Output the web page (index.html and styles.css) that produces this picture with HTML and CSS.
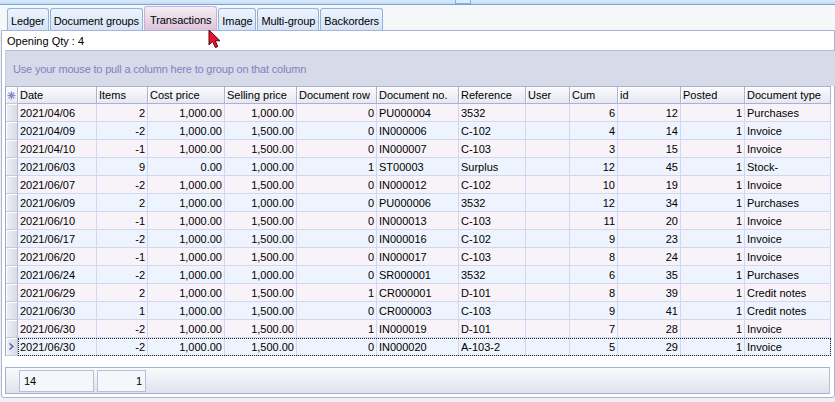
FILE: index.html
```html
<!DOCTYPE html>
<html>
<head>
<meta charset="utf-8">
<link rel="stylesheet" href="styles.css">
</head>
<body>
<div class="app">
  <div class="topstrip"><span class="grip"></span></div>
  <div class="tabbar">
    <div class="tab">Ledger</div>
    <div class="tab">Document groups</div>
    <div class="tab active">Transactions</div>
    <div class="tab">Image</div>
    <div class="tab">Multi-group</div>
    <div class="tab">Backorders</div>
  </div>
  <div class="panel">
    <div class="opening">Opening Qty : 4</div>
    <div class="grouparea">Use your mouse to pull a column here to group on that column</div>
    <div class="grid">
      <div class="row head">
        <div class="ind"><svg width="9" height="9" viewBox="0 0 9 9"><g stroke="#7b8cc8" stroke-width="1.2"><line x1="4.5" y1="0.5" x2="4.5" y2="8.5"/><line x1="0.5" y1="4.5" x2="8.5" y2="4.5"/><line x1="1.6" y1="1.6" x2="7.4" y2="7.4"/><line x1="7.4" y1="1.6" x2="1.6" y2="7.4"/></g></svg></div>
        <div>Date</div><div>Items</div><div>Cost price</div><div>Selling price</div><div>Document row</div><div>Document no.</div><div>Reference</div><div>User</div><div>Cum</div><div>id</div><div>Posted</div><div>Document type</div>
      </div>
      <div class="row odd"><div class="ind"></div><div>2021/04/06</div><div class="r">2</div><div class="r">1,000.00</div><div class="r">1,000.00</div><div class="r">0</div><div>PU000004</div><div>3532</div><div></div><div class="r">6</div><div class="r">12</div><div class="r">1</div><div>Purchases</div></div>
      <div class="row even"><div class="ind"></div><div>2021/04/09</div><div class="r">-2</div><div class="r">1,000.00</div><div class="r">1,500.00</div><div class="r">0</div><div>IN000006</div><div>C-102</div><div></div><div class="r">4</div><div class="r">14</div><div class="r">1</div><div>Invoice</div></div>
      <div class="row odd"><div class="ind"></div><div>2021/04/10</div><div class="r">-1</div><div class="r">1,000.00</div><div class="r">1,500.00</div><div class="r">0</div><div>IN000007</div><div>C-103</div><div></div><div class="r">3</div><div class="r">15</div><div class="r">1</div><div>Invoice</div></div>
      <div class="row even"><div class="ind"></div><div>2021/06/03</div><div class="r">9</div><div class="r">0.00</div><div class="r">1,000.00</div><div class="r">1</div><div>ST00003</div><div>Surplus</div><div></div><div class="r">12</div><div class="r">45</div><div class="r">1</div><div>Stock-</div></div>
      <div class="row odd"><div class="ind"></div><div>2021/06/07</div><div class="r">-2</div><div class="r">1,000.00</div><div class="r">1,500.00</div><div class="r">0</div><div>IN000012</div><div>C-102</div><div></div><div class="r">10</div><div class="r">19</div><div class="r">1</div><div>Invoice</div></div>
      <div class="row even"><div class="ind"></div><div>2021/06/09</div><div class="r">2</div><div class="r">1,000.00</div><div class="r">1,000.00</div><div class="r">0</div><div>PU000006</div><div>3532</div><div></div><div class="r">12</div><div class="r">34</div><div class="r">1</div><div>Purchases</div></div>
      <div class="row odd"><div class="ind"></div><div>2021/06/10</div><div class="r">-1</div><div class="r">1,000.00</div><div class="r">1,500.00</div><div class="r">0</div><div>IN000013</div><div>C-103</div><div></div><div class="r">11</div><div class="r">20</div><div class="r">1</div><div>Invoice</div></div>
      <div class="row even"><div class="ind"></div><div>2021/06/17</div><div class="r">-2</div><div class="r">1,000.00</div><div class="r">1,500.00</div><div class="r">0</div><div>IN000016</div><div>C-102</div><div></div><div class="r">9</div><div class="r">23</div><div class="r">1</div><div>Invoice</div></div>
      <div class="row odd"><div class="ind"></div><div>2021/06/20</div><div class="r">-1</div><div class="r">1,000.00</div><div class="r">1,500.00</div><div class="r">0</div><div>IN000017</div><div>C-103</div><div></div><div class="r">8</div><div class="r">24</div><div class="r">1</div><div>Invoice</div></div>
      <div class="row even"><div class="ind"></div><div>2021/06/24</div><div class="r">-2</div><div class="r">1,000.00</div><div class="r">1,000.00</div><div class="r">0</div><div>SR000001</div><div>3532</div><div></div><div class="r">6</div><div class="r">35</div><div class="r">1</div><div>Purchases</div></div>
      <div class="row odd"><div class="ind"></div><div>2021/06/29</div><div class="r">2</div><div class="r">1,000.00</div><div class="r">1,500.00</div><div class="r">1</div><div>CR000001</div><div>D-101</div><div></div><div class="r">8</div><div class="r">39</div><div class="r">1</div><div>Credit notes</div></div>
      <div class="row even"><div class="ind"></div><div>2021/06/30</div><div class="r">1</div><div class="r">1,000.00</div><div class="r">1,500.00</div><div class="r">0</div><div>CR000003</div><div>C-103</div><div></div><div class="r">9</div><div class="r">41</div><div class="r">1</div><div>Credit notes</div></div>
      <div class="row odd"><div class="ind"></div><div>2021/06/30</div><div class="r">-2</div><div class="r">1,000.00</div><div class="r">1,500.00</div><div class="r">1</div><div>IN000019</div><div>D-101</div><div></div><div class="r">7</div><div class="r">28</div><div class="r">1</div><div>Invoice</div></div>
      <div class="row even current"><div class="ind"><svg width="6" height="9" viewBox="0 0 6 9"><path d="M0.5 0.5 L5 4.5 L0.5 8.5 L0.5 6.5 L2.8 4.5 L0.5 2.5 Z" fill="#4a63b5"/></svg></div><div>2021/06/30</div><div class="r">-2</div><div class="r">1,000.00</div><div class="r">1,500.00</div><div class="r">0</div><div>IN000020</div><div>A-103-2</div><div></div><div class="r">5</div><div class="r">29</div><div class="r">1</div><div>Invoice</div></div>
    </div>
    <div class="gridspace"></div>
    <div class="footer">
      <div class="fbox">14</div>
      <div class="fbox small">1</div>
    </div>
  </div>
  <svg class="cursor" width="14" height="20" viewBox="0 0 14 20"><path d="M1 1 L1 16 L4.6 12.6 L7.4 18.6 L9.8 17.6 L7.2 11.8 L12 11.8 Z" fill="#e3162c" stroke="#5a0410" stroke-width="1" stroke-linejoin="miter"/></svg>
</div>
</body>
</html>
```

FILE: styles.css
```css
* { box-sizing: border-box; }
html, body { margin: 0; padding: 0; }
body {
  background: #eef0f4;
  font-family: "Liberation Sans", Arial, sans-serif;
  font-size: 11px;
  color: #000;
  width: 835px;
  height: 402px;
  overflow: hidden;
}
.app { position: relative; width: 835px; height: 402px; }

.topstrip {
  height: 5px;
  background: linear-gradient(#dbe9f9, #c3dbf4);
  border-bottom: 1px solid #6ea6df;
  position: relative;
}
.grip {
  position: absolute;
  left: 455px;
  top: 0;
  width: 16px;
  height: 4px;
  background: #dcebfb;
  border: 1px solid #7fb0e6;
  border-top: none;
}

.tabbar {
  height: 25px;
  background: #f6f7f9;
  display: flex;
  align-items: flex-end;
  padding-left: 7px;
  gap: 1px;
}
.tab {
  height: 22px;
  padding: 5px 3px 0;
  border: 1px solid #8fb2df;
  border-bottom: none;
  border-radius: 3px 3px 0 0;
  background: linear-gradient(#edf4fd, #d5e4f6);
  white-space: nowrap;
  line-height: 14px;
  letter-spacing: -0.1px;
}
.tab.active {
  height: 24px;
  padding: 6px 5px 0;
  background: linear-gradient(#f6eef6, #dbc3da);
  border-color: #cfb0cf;
}

.panel {
  margin-left: 1px;
  width: 834px;
  height: 368px;
  background: #fff;
  border: 1px solid #aab2d6;
  border-radius: 0 0 3px 3px;
  padding-left: 2px;
  display: flex;
  flex-direction: column;
}
.opening {
  height: 19px;
  line-height: 21px;
  padding-left: 3px;
}
.grouparea {
  height: 36px;
  margin-left: 1px;
  margin-right: -1px;
  background: #d7dae9;
  border-top: 1px solid #b7bcdb;
  border-left: 1px solid #c9cde3;
  color: #7c84c2;
  padding: 10px 0 0 7px;
  line-height: 16px;
  letter-spacing: -0.18px;
}

.grid {
  border-left: 1px solid #9ea5c9;
  margin-left: 1px;
  width: 826px;
}
.row {
  display: grid;
  grid-template-columns: 12px 79px 51px 77px 72px 80px 82px 67px 44px 48px 63px 64px 86px;
  height: 18px;
}
.row > div {
  border-right: 1px solid #d3d5f1;
  border-bottom: 1px solid #d3d5f1;
  padding: 0 2px 0 2px;
  line-height: 18px;
  white-space: nowrap;
  overflow: hidden;
}
.row > div.r { text-align: right; }
.row.odd > div { background: #f8f3f8; }
.row.even > div { background: #eef4fd; }

.row.head > div {
  background: linear-gradient(#fbfbfd, #e6e8f1);
  border-top: 1px solid #aab1d6;
  border-right: 1px solid #aab1d6;
  border-bottom: 1px solid #aab1d6;
  line-height: 16px;
  padding-left: 2px;
  box-shadow: inset 1px 1px 0 #ffffff;
}
.row > div.ind,
.row.odd > div.ind,
.row.even > div.ind {
  background: linear-gradient(90deg, #eef0f5, #d9dce6);
  border-right: 1px solid #b4b9d6;
  border-bottom: 1px solid #c6c9de;
  box-shadow: inset 1px 1px 0 #ffffff;
  padding: 0;
  display: flex;
  align-items: center;
  justify-content: center;
}
.row.head > div.ind { background: linear-gradient(#fbfbfd, #e6e8f1); }

.row.current { position: relative; }
.row.current::after {
  content: "";
  position: absolute;
  left: 12px;
  top: 0;
  right: 0;
  bottom: 0;
  border: 1px dotted #222;
  pointer-events: none;
}

.gridspace { height: 11px; }

.footer {
  height: 27px;
  margin-left: 1px;
  width: 825px;
  border: 1px solid #a8aed2;
  border-right-color: #b8bddb;
  background: linear-gradient(#fbfbfd, #dfe2ed);
  display: flex;
  align-items: flex-end;
  gap: 3px;
  padding: 0 0 1px 13px;
}
.fbox {
  width: 75px;
  height: 22px;
  background: #f6f7fa;
  border: 1px solid #b9bedc;
  line-height: 20px;
  padding-left: 4px;
}
.fbox.small {
  width: 49px;
  text-align: right;
  padding-right: 3px;
}

.cursor {
  position: absolute;
  left: 208px;
  top: 29px;
}
```
